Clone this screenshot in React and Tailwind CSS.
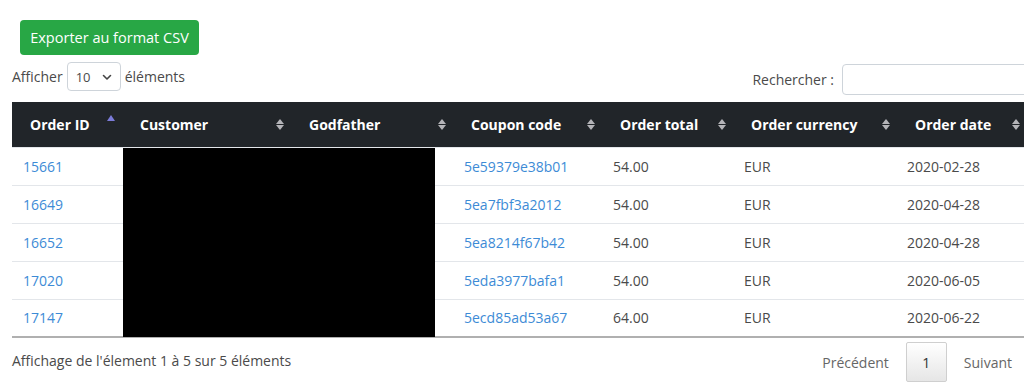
import React from "react";

const rows = [
  { id: "15661", coupon: "5e59379e38b01", total: "54.00", cur: "EUR", date: "2020-02-28" },
  { id: "16649", coupon: "5ea7fbf3a2012", total: "54.00", cur: "EUR", date: "2020-04-28" },
  { id: "16652", coupon: "5ea8214f67b42", total: "54.00", cur: "EUR", date: "2020-04-28" },
  { id: "17020", coupon: "5eda3977bafa1", total: "54.00", cur: "EUR", date: "2020-06-05" },
  { id: "17147", coupon: "5ecd85ad53a67", total: "64.00", cur: "EUR", date: "2020-06-22" },
];

function SortIcon({ active }) {
  if (active) {
    return (
      <span className="flex flex-col items-center gap-[1px] -mt-[6px]">
        <span className="block w-0 h-0 border-l-[4px] border-r-[4px] border-b-[6px] border-l-transparent border-r-transparent border-b-[#7b7bd8]" />
        <span className="block w-0 h-0 border-l-[4px] border-r-[4px] border-t-[6px] border-l-transparent border-r-transparent border-t-transparent" />
      </span>
    );
  }
  return (
    <span className="flex flex-col items-center gap-[1px]">
      <span className="block w-0 h-0 border-l-[4px] border-r-[4px] border-b-[5px] border-l-transparent border-r-transparent border-b-[#b4b4b8]" />
      <span className="block w-0 h-0 border-l-[4px] border-r-[4px] border-t-[5px] border-l-transparent border-r-transparent border-t-[#b4b4b8]" />
    </span>
  );
}

const cols = [
  { label: "Order ID", w: "w-[110px]", active: true },
  { label: "Customer", w: "w-[169px]" },
  { label: "Godfather", w: "w-[162px]" },
  { label: "Coupon code", w: "w-[149px]" },
  { label: "Order total", w: "w-[131px]" },
  { label: "Order currency", w: "w-[164px]" },
  { label: "Order date", w: "w-[130px]" },
];

export default function App() {
  return (
    <div className="w-[1024px] h-[383px] overflow-hidden bg-white text-[14px] text-[#4a4a4a] font-['Open_Sans',sans-serif]">
      {/* Export */}
      <div className="pt-[20px] pl-[20px]">
        <button className="h-[35px] w-[179px] rounded-[4px] bg-[#28a745] text-white text-[14.5px]">
          Exporter au format CSV
        </button>
      </div>

      {/* Controls */}
      <div className="flex items-center justify-between pl-[12px] mt-[8px] h-[31px]">
        <div className="flex items-center gap-[4px] -mt-[4px]">
          <span>Afficher</span>
          <div className="flex items-center justify-between w-[54px] h-[29px] border border-[#ced4da] rounded-[4px] px-[8px] pt-[3px] text-[13px]">
            <span>10</span>
            <svg width="10" height="10" viewBox="0 0 10 10" className="mb-[2px]">
              <path d="M1.5 3.5 L5 7 L8.5 3.5" fill="none" stroke="#444" strokeWidth="1.6" strokeLinecap="round" strokeLinejoin="round" />
            </svg>
          </div>
          <span>éléments</span>
        </div>
        <div className="flex items-center gap-[8px] mt-[2px]">
          <span>Rechercher :</span>
          <div className="w-[200px] h-[31px] border border-[#ced4da] rounded-[4px] -mr-[18px]" />
        </div>
      </div>

      {/* Table */}
      <div className="relative ml-[12px] mt-[8px] w-[1015px]">
        <table className="w-[1015px] table-fixed border-collapse">
          <thead>
            <tr className="bg-[#212529] text-white h-[45px]">
              {cols.map((c) => (
                <th key={c.label} className={`${c.w} p-0 text-left font-bold`}>
                  <div className="flex items-center justify-between pl-[18px] pr-[7px]">
                    <span>{c.label}</span>
                    <SortIcon active={c.active} />
                  </div>
                </th>
              ))}
            </tr>
          </thead>
          <tbody>
            {rows.map((r, i) => (
              <tr key={r.id} className={`h-[38px] border-t border-[#e3e6ea] ${i === rows.length - 1 ? "border-b-2 border-b-[#b0b0b0]" : ""}`}>
                <td className="pl-[11px]">
                  <a className="text-[#3d8bd6]">{r.id}</a>
                </td>
                <td />
                <td />
                <td className="pl-[11px]">
                  <a className="text-[#3d8bd6]">{r.coupon}</a>
                </td>
                <td className="pl-[11px]">{r.total}</td>
                <td className="pl-[11px]">{r.cur}</td>
                <td className="pl-[10px]">{r.date}</td>
              </tr>
            ))}
          </tbody>
        </table>
        {/* redaction */}
        <div className="absolute left-[111px] top-[46px] w-[312px] h-[189px] bg-black" />
      </div>

      {/* Footer */}
      <div className="flex items-start justify-between pl-[12px] mt-[4px]">
        <span className="mt-[8px]">Affichage de l'élement 1 à 5 sur 5 éléments</span>
        <div className="flex items-start pr-[12px]">
          <span className="mt-[10px] mr-[17px] text-[#666]">Précédent</span>
          <span className="flex items-center justify-center w-[41px] h-[40px] border border-[#cfcfcf] rounded-[2px] bg-gradient-to-b from-white to-[#e6e6e6] text-[#333]">
            1
          </span>
          <span className="mt-[10px] ml-[17px] text-[#666]">Suivant</span>
        </div>
      </div>
    </div>
  );
}
